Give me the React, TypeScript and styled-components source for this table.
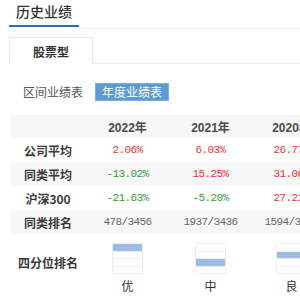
import React from "react";
import styled, { createGlobalStyle } from "styled-components";

const Global = createGlobalStyle`
  html, body { margin: 0; padding: 0; background: #fff; overflow: hidden; }
  body { font-family: "Noto Sans CJK SC", "Liberation Sans", sans-serif; }
`;

const Page = styled.div`
  width: 300px;
  height: 300px;
  overflow: hidden;
  padding-left: 9px;
  box-sizing: border-box;
`;

const Header = styled.div`
  display: flex;
  align-items: flex-start;
  width: 400px;
`;

const Title = styled.div`
  padding: 3px 7px 5px;
  font-size: 14px;
  line-height: 17px;
  font-weight: 500;
  color: #333;
  border-bottom: 2px solid #1f6fbf;
`;

const HeaderFill = styled.div`
  flex: 1;
  height: 28px;
  border-bottom: 1px solid #eeeeee;
`;

const TabRow = styled.div`
  margin-top: 8px;
  display: flex;
  width: 400px;
  border-bottom: 1px solid #eeeeee;
`;

const Tab = styled.div`
  width: 84px;
  height: 27px;
  padding-top: 2px;
  box-sizing: border-box;
  border: 1px solid #e6e6e6;
  border-bottom: 1px solid #fff;
  margin-bottom: -1px;
  display: flex;
  align-items: center;
  justify-content: center;
  font-size: 12px;
  font-weight: 700;
  color: #333;
`;

const FilterRow = styled.div`
  margin-top: 19px;
  display: flex;
  align-items: center;
  padding-left: 14px;
  gap: 12px;
`;

const FilterLabel = styled.span<{ $active?: boolean }>`
  font-size: 12px;
  line-height: 16px;
  height: 16px;
  padding: 0 ${(p) => (p.$active ? "6px" : "0")};
  color: ${(p) => (p.$active ? "#fff" : "#555")};
  background: ${(p) => (p.$active ? "#5b9ad3" : "transparent")};
  border: ${(p) => (p.$active ? "1px solid #7fb0dd" : "none")};
`;

const Table = styled.div`
  margin-top: 14px;
  margin-left: 1px;
  width: 400px;
`;

const Row = styled.div<{ $shaded?: boolean; $h?: number }>`
  display: grid;
  grid-template-columns: 76px 83px 83px 79px 1fr;
  align-items: center;
  height: ${(p) => p.$h ?? 24}px;
  background: ${(p) => (p.$shaded ? "#f7f7f7" : "#fff")};
`;

const Label = styled.div`
  text-align: center;
  font-size: 12px;
  font-weight: 700;
  color: #3a3a3a;
`;

const Year = styled.div`
  text-align: center;
  font-size: 12px;
  font-weight: 700;
  color: #4a4a4a;
  font-family: "Liberation Sans", "Noto Sans CJK SC", sans-serif;
`;

const Value = styled.div<{ $tone: "up" | "down" | "plain" }>`
  text-align: center;
  font-family: "Liberation Mono", "Noto Sans CJK SC", monospace;
  font-size: 11px;
  letter-spacing: -0.6px;
  color: ${(p) =>
    p.$tone === "up" ? "#e5353a" : p.$tone === "down" ? "#2f9a38" : "#666"};
`;

const QuartCell = styled.div`
  align-self: start;
  padding-top: 9px;
  display: flex;
  flex-direction: column;
  align-items: center;
`;

const QuartLabel = styled(Label)`
  align-self: center;
  margin-top: -2px;
`;

const Bars = styled.div`
  width: 29px;
  display: flex;
  flex-direction: column;
  border: 1px solid #eceef2;
`;

const Bar = styled.div<{ $on?: boolean }>`
  height: 6.5px;
  background: ${(p) => (p.$on ? "#9dbde0" : "#fff")};
  & + & {
    border-top: 1px solid #eceef2;
  }
`;

const QuartText = styled.div`
  margin-top: 5px;
  font-size: 12px;
  line-height: 14px;
  color: #333;
`;

const years = ["2022年", "2021年", "2020年"];

const rows: { label: string; values: string[]; tones: ("up" | "down" | "plain")[] }[] = [
  { label: "公司平均", values: ["2.06%", "6.03%", "26.77%"], tones: ["up", "up", "up"] },
  { label: "同类平均", values: ["-13.02%", "15.25%", "31.06%"], tones: ["down", "up", "up"] },
  { label: "沪深300", values: ["-21.63%", "-5.20%", "27.21%"], tones: ["down", "down", "up"] },
  { label: "同类排名", values: ["478/3456", "1937/3436", "1594/3100"], tones: ["plain", "plain", "plain"] },
];

const quarts = [
  { q: 0, text: "优" },
  { q: 2, text: "中" },
  { q: 1, text: "良" },
];

export default function App() {
  return (
    <Page>
      <Global />
      <Header>
        <Title>历史业绩</Title>
        <HeaderFill />
      </Header>
      <TabRow>
        <Tab>股票型</Tab>
      </TabRow>
      <FilterRow>
        <FilterLabel>区间业绩表</FilterLabel>
        <FilterLabel $active>年度业绩表</FilterLabel>
      </FilterRow>
      <Table>
        <Row $shaded $h={23}>
          <div />
          {years.map((y) => (
            <Year key={y}>{y}</Year>
          ))}
        </Row>
        {rows.map((r, i) => (
          <Row key={r.label} $shaded={i % 2 === 1}>
            <Label>{r.label}</Label>
            {r.values.map((v, j) => (
              <Value key={j} $tone={r.tones[j]}>
                {v}
              </Value>
            ))}
          </Row>
        ))}
        <Row $h={56}>
          <QuartLabel>四分位排名</QuartLabel>
          {quarts.map((q, i) => (
            <QuartCell key={i}>
              <Bars>
                {[0, 1, 2, 3].map((k) => (
                  <Bar key={k} $on={k === q.q} />
                ))}
              </Bars>
              <QuartText>{q.text}</QuartText>
            </QuartCell>
          ))}
        </Row>
      </Table>
    </Page>
  );
}
